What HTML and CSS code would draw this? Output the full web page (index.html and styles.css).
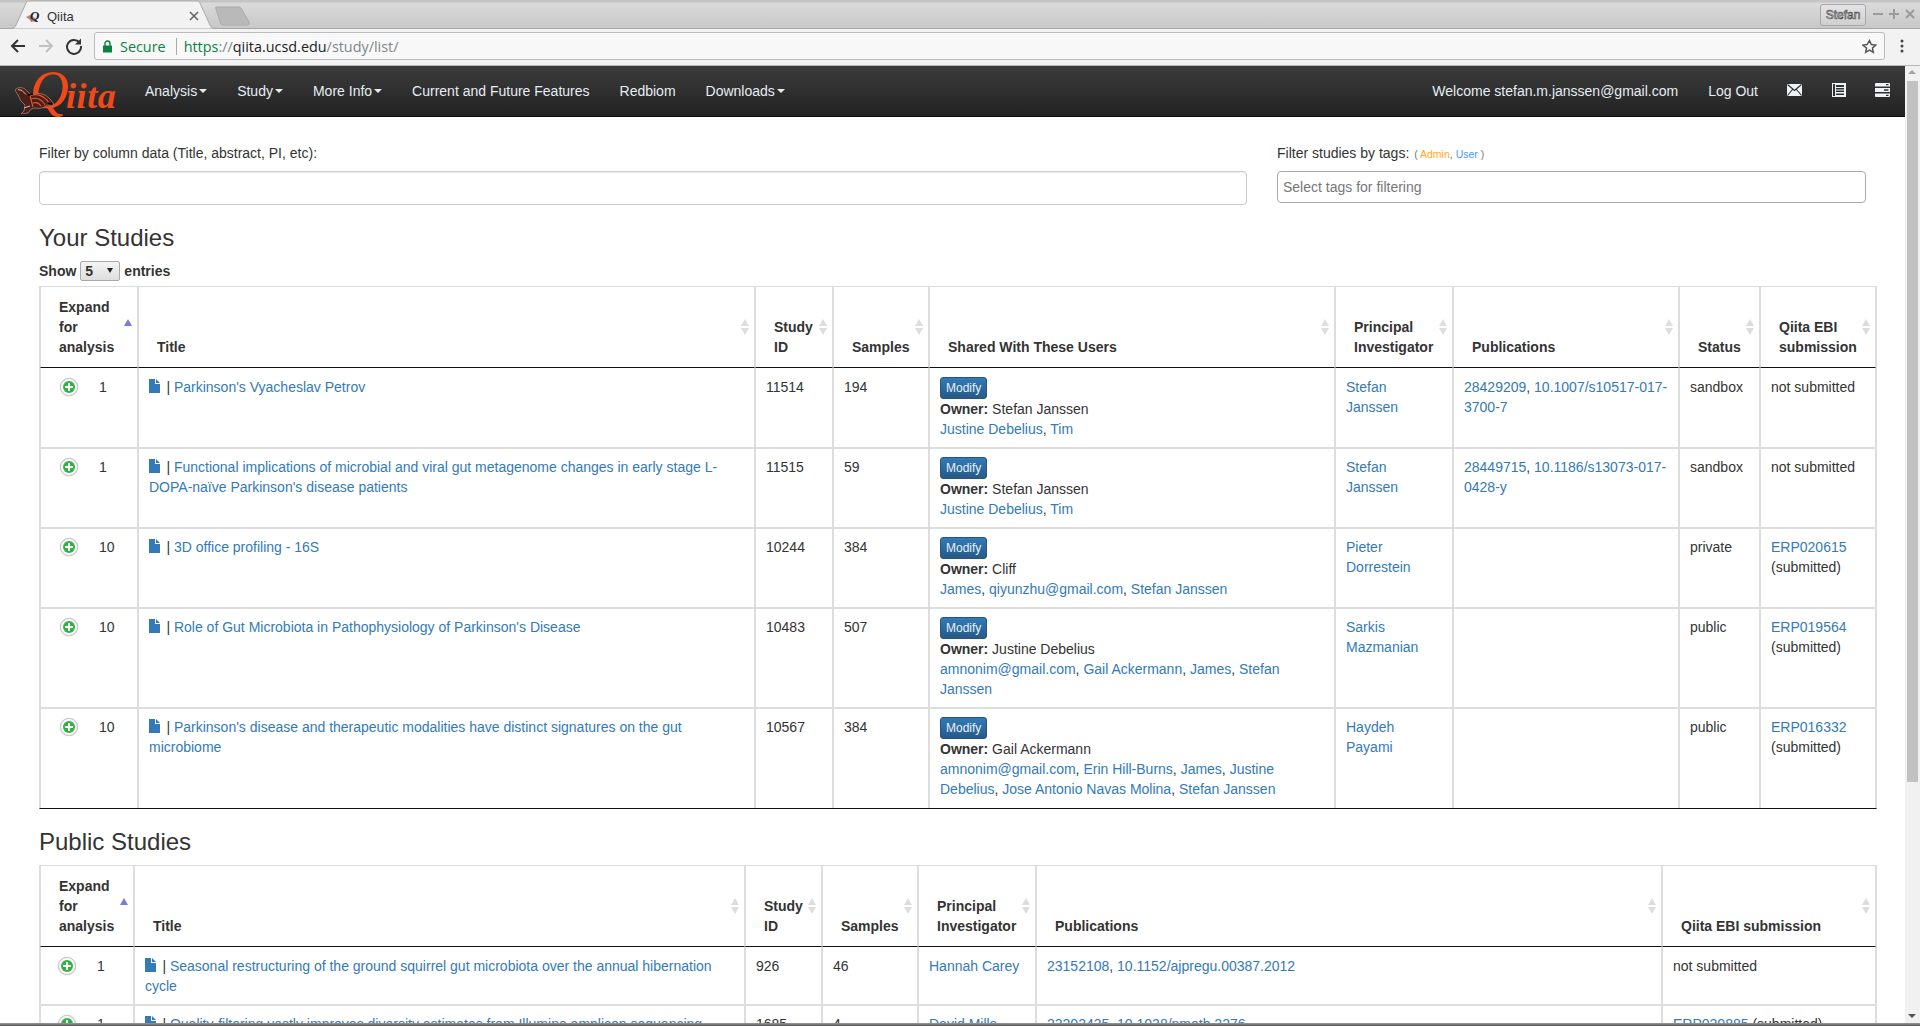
FILE: index.html
```html
<!DOCTYPE html>
<html lang="en">
<head>
<meta charset="utf-8">
<title>Qiita</title>
<link rel="stylesheet" href="styles.css">
</head>
<body>
<div class="browser">
  <div class="tabstrip">
    <div class="tab">
      <svg class="tab-shape" width="206" height="29" viewBox="0 0 206 29"><path d="M0 28.500H2C4 28.500 5 27 6 25L16 3C17 1.500 18 1 20 1H186C188 1 189 1.500 190 3L200 25C201 27 202 28.500 204 28.500H206" fill="#f2f2f2" stroke="#a8a8a8"/></svg>
      <svg class="favicon" width="16" height="16" viewBox="0 0 16 16"><path d="M0 9l4-2 4 2 3 4-6 1-1-2z" fill="#b08a84"/><text x="4" y="12" class="favicon-q">Q</text></svg>
      <span class="tab-title">Qiita</span>
      <svg class="tab-close" width="10" height="10" viewBox="0 0 10 10"><path d="M1 1l8 8M9 1l-8 8" stroke="#666" stroke-width="1.600"/></svg>
    </div>
    <svg class="newtab" width="36" height="20" viewBox="0 0 36 20"><path d="M1 1H24C25 1 26 1.500 26.500 3L34 16C35 18 34 19 32 19H8C7 19 6 18.500 5.500 17L1 3C0.500 2 0.500 1 1 1Z" fill="#b9b9b9" stroke="#aaa"/></svg>
    <span class="spacer"></span>
    <span class="profile">Stefan</span>
    <span class="winbtns">
      <svg width="10" height="10" viewBox="0 0 10 10"><path d="M0 5h10" stroke="#9a9a9a" stroke-width="2"/></svg>
      <svg width="10" height="10" viewBox="0 0 10 10"><path d="M0 5h10M5 0v10" stroke="#9a9a9a" stroke-width="2"/></svg>
      <svg width="10" height="10" viewBox="0 0 10 10"><path d="M1 1l8 8M9 1l-8 8" stroke="#9a9a9a" stroke-width="2"/></svg>
    </span>
  </div>
  <div class="toolbar">
    <svg class="tool" width="18" height="18" viewBox="0 0 18 18"><path d="M16 9H3M9 3L3 9l6 6" fill="none" stroke="#333" stroke-width="2"/></svg>
    <svg class="tool" width="18" height="18" viewBox="0 0 18 18"><path d="M2 9h13M9 3l6 6-6 6" fill="none" stroke="#c0c0c0" stroke-width="2"/></svg>
    <svg class="tool" width="18" height="18" viewBox="0 0 18 18"><path d="M14.500 5.500A7 7 0 1 0 16 9" fill="none" stroke="#333" stroke-width="2"/><path d="M16 1.500V7.500H10z" fill="#333"/></svg>
    <div class="omnibox">
      <svg class="lock" width="10" height="13" viewBox="0 0 10 13"><path d="M0 5.500h9v7H0z" fill="#0b8043"/><path d="M2 6V3.500a2.500 2.500 0 0 1 5 0V6" fill="none" stroke="#0b8043" stroke-width="1.400"/></svg>
      <span class="secure">Secure</span>
      <span class="omni-sep"></span>
      <span class="url"><span class="url-scheme">https</span><span class="url-dim">://</span><span class="url-host">qiita.ucsd.edu</span><span class="url-dim">/study/list/</span></span>
      <span class="spacer"></span>
      <svg width="15" height="15" viewBox="0 0 24 24"><path d="M12 2.500l2.900 6.400 7 .8-5.200 4.700 1.400 6.900-6.100-3.500-6.100 3.500 1.400-6.900L1.100 9.700l7-.8z" fill="none" stroke="#555" stroke-width="2.400"/></svg>
    </div>
    <svg class="kebab" width="4" height="14" viewBox="0 0 4 14"><circle cx="2" cy="2" r="1.500" fill="#444"/><circle cx="2" cy="7" r="1.500" fill="#444"/><circle cx="2" cy="12" r="1.500" fill="#444"/></svg>
  </div>
</div>

<div class="viewport">
  <div class="page">
    <nav class="navbar">
      <a class="brand">
        <span class="brand-q">Q</span><span class="brand-rest">iita</span>
        <svg class="turtle" width="44" height="27" viewBox="0 0 44 27">
          <path d="M0 3C2 0 7 0 10 2l6 6c5-3 14-2 19 4l4 5-2 2-5-1c-3 3-8 4-12 3l-4 1-3 4-7 1 3-3 1-6-4-4-3-6C2 6 1 5 0 3z" fill="#4a2018" stroke="#b98a80" stroke-width=".7"/>
          <path d="M15 9c6-3 14-1 19 7M16 12c5-2 11 0 14 6M18 16c3-1 6 0 8 3M15 9l3 11" fill="none" stroke="#e8552a" stroke-width="1.100"/>
          <path d="M3 2.500l4 1 4 4M9 21l6-2" fill="none" stroke="#d9bdb5" stroke-width="1"/>
          <path d="M13 8l5-1M33 16l4 1" stroke="#000" stroke-width="1.500"/>
        </svg>
      </a>
      <a class="nav-item">Analysis<span class="caret"></span></a>
      <a class="nav-item">Study<span class="caret"></span></a>
      <a class="nav-item">More Info<span class="caret"></span></a>
      <a class="nav-item">Current and Future Features</a>
      <a class="nav-item">Redbiom</a>
      <a class="nav-item">Downloads<span class="caret"></span></a>
      <span class="spacer"></span>
      <a class="nav-item">Welcome stefan.m.janssen@gmail.com</a>
      <a class="nav-item">Log Out</a>
      <a class="nav-item nav-icon"><svg class="wide-icon" width="15" height="14" viewBox="0 0 15 14"><path d="M0 1h15v12H0z" fill="#eef3f8"/><path d="M.5 1.500L7.500 7.500l7-6M.5 12.500l5-6M14.500 12.500l-5-6" fill="none" stroke="#2b2b2b" stroke-width="1.100"/></svg></a>
      <a class="nav-item nav-icon"><svg width="14" height="14" viewBox="0 0 14 14"><path fill-rule="evenodd" d="M0 0h14v14H0zM1 1v12h2V1zm3 1v2h8V2zm0 3v1.500h8V5zm0 2.500V9h8V7.500zm0 3V12h8v-1.500z" fill="#eef3f8"/></svg></a>
      <a class="nav-item nav-icon"><svg class="wide-icon" width="15" height="14" viewBox="0 0 15 14"><path fill-rule="evenodd" d="M1 0h13a1 1 0 0 1 1 1v2.500H0V1a1 1 0 0 1 1-1zm10 1v1.300h2.500V1zM0 5h15v4H0zm9 1.300v1.400h4.500V6.300zM0 10.500h15V13a1 1 0 0 1-1 1H1a1 1 0 0 1-1-1zm11 1.200V13h2.500v-1.300z" fill="#eef3f8"/></svg></a>
    </nav>

    <main class="content">
      <section class="filters">
        <div class="filter">
          <label class="filter-label">Filter by column data (Title, abstract, PI, etc):</label>
          <div class="text-input"></div>
        </div>
        <div class="filter">
          <label class="filter-label">Filter studies by tags: <small class="legend">( <span class="tag-admin">Admin</span>, <span class="tag-user">User</span> )</small></label>
          <div class="tag-input">Select tags for filtering</div>
        </div>
      </section>

      <h3 class="heading heading-first">Your Studies</h3>
      <div class="length"><b>Show</b><span class="select">5<i class="select-arrow"></i></span><b>entries</b></div>
      <table class="studies studies-own">
        <colgroup><col class="o1"><col class="o2"><col class="o3"><col class="o4"><col class="o5"><col class="o6"><col class="o7"><col class="o8"><col class="o9"></colgroup>
        <thead><tr>
          <th class="asc">Expand for analysis</th><th class="both">Title</th><th class="both">Study ID</th><th class="both">Samples</th><th class="both">Shared With These Users</th><th class="both">Principal Investigator</th><th class="both">Publications</th><th class="both">Status</th><th class="both">Qiita EBI submission</th>
        </tr></thead>
        <tbody>
          <tr>
            <td class="expand"><span class="plus"><i></i></span><span class="num">1</span></td>
            <td><svg class="doc" width="11" height="14" viewBox="0 0 11 14"><path d="M0 0h6v5h5v9H0zM7 0l4 4H7z"/></svg> | <a>Parkinson's Vyacheslav Petrov</a></td>
            <td>11514</td><td>194</td>
            <td><span class="btn">Modify</span><br><b>Owner:</b> Stefan Janssen<br><a>Justine Debelius</a>, <a>Tim</a></td>
            <td><a>Stefan Janssen</a></td>
            <td><a>28429209</a>, <a>10.1007/s10517-017-3700-7</a></td>
            <td>sandbox</td><td>not submitted</td>
          </tr>
          <tr>
            <td class="expand"><span class="plus"><i></i></span><span class="num">1</span></td>
            <td><svg class="doc" width="11" height="14" viewBox="0 0 11 14"><path d="M0 0h6v5h5v9H0zM7 0l4 4H7z"/></svg> | <a>Functional implications of microbial and viral gut metagenome changes in early stage L-DOPA-naïve Parkinson's disease patients</a></td>
            <td>11515</td><td>59</td>
            <td><span class="btn">Modify</span><br><b>Owner:</b> Stefan Janssen<br><a>Justine Debelius</a>, <a>Tim</a></td>
            <td><a>Stefan Janssen</a></td>
            <td><a>28449715</a>, <a>10.1186/s13073-017-0428-y</a></td>
            <td>sandbox</td><td>not submitted</td>
          </tr>
          <tr>
            <td class="expand"><span class="plus"><i></i></span><span class="num">10</span></td>
            <td><svg class="doc" width="11" height="14" viewBox="0 0 11 14"><path d="M0 0h6v5h5v9H0zM7 0l4 4H7z"/></svg> | <a>3D office profiling - 16S</a></td>
            <td>10244</td><td>384</td>
            <td><span class="btn">Modify</span><br><b>Owner:</b> Cliff<br><a>James</a>, <a>qiyunzhu@gmail.com</a>, <a>Stefan Janssen</a></td>
            <td><a>Pieter Dorrestein</a></td>
            <td></td>
            <td>private</td><td><a>ERP020615</a> (submitted)</td>
          </tr>
          <tr>
            <td class="expand"><span class="plus"><i></i></span><span class="num">10</span></td>
            <td><svg class="doc" width="11" height="14" viewBox="0 0 11 14"><path d="M0 0h6v5h5v9H0zM7 0l4 4H7z"/></svg> | <a>Role of Gut Microbiota in Pathophysiology of Parkinson's Disease</a></td>
            <td>10483</td><td>507</td>
            <td><span class="btn">Modify</span><br><b>Owner:</b> Justine Debelius<br><a>amnonim@gmail.com</a>, <a>Gail Ackermann</a>, <a>James</a>, <a>Stefan Janssen</a></td>
            <td><a>Sarkis Mazmanian</a></td>
            <td></td>
            <td>public</td><td><a>ERP019564</a> (submitted)</td>
          </tr>
          <tr>
            <td class="expand"><span class="plus"><i></i></span><span class="num">10</span></td>
            <td><svg class="doc" width="11" height="14" viewBox="0 0 11 14"><path d="M0 0h6v5h5v9H0zM7 0l4 4H7z"/></svg> | <a>Parkinson's disease and therapeutic modalities have distinct signatures on the gut microbiome</a></td>
            <td>10567</td><td>384</td>
            <td><span class="btn">Modify</span><br><b>Owner:</b> Gail Ackermann<br><a>amnonim@gmail.com</a>, <a>Erin Hill-Burns</a>, <a>James</a>, <a>Justine Debelius</a>, <a>Jose Antonio Navas Molina</a>, <a>Stefan Janssen</a></td>
            <td><a>Haydeh Payami</a></td>
            <td></td>
            <td>public</td><td><a>ERP016332</a> (submitted)</td>
          </tr>
        </tbody>
      </table>

      <h3 class="heading heading-second">Public Studies</h3>
      <table class="studies studies-public">
        <colgroup><col class="p1"><col class="p2"><col class="p3"><col class="p4"><col class="p5"><col class="p6"><col class="p7"></colgroup>
        <thead><tr>
          <th class="asc">Expand for analysis</th><th class="both">Title</th><th class="both">Study ID</th><th class="both">Samples</th><th class="both">Principal Investigator</th><th class="both">Publications</th><th class="both">Qiita EBI submission</th>
        </tr></thead>
        <tbody>
          <tr>
            <td class="expand"><span class="plus"><i></i></span><span class="num">1</span></td>
            <td><svg class="doc" width="11" height="14" viewBox="0 0 11 14"><path d="M0 0h6v5h5v9H0zM7 0l4 4H7z"/></svg> | <a>Seasonal restructuring of the ground squirrel gut microbiota over the annual hibernation cycle</a></td>
            <td>926</td><td>46</td>
            <td><a>Hannah Carey</a></td>
            <td><a>23152108</a>, <a>10.1152/ajpregu.00387.2012</a></td>
            <td>not submitted</td>
          </tr>
          <tr>
            <td class="expand"><span class="plus"><i></i></span><span class="num">1</span></td>
            <td><svg class="doc" width="11" height="14" viewBox="0 0 11 14"><path d="M0 0h6v5h5v9H0zM7 0l4 4H7z"/></svg> | <a>Quality-filtering vastly improves diversity estimates from Illumina amplicon sequencing</a> -</td>
            <td>1685</td><td>4</td>
            <td><a>David Mills</a></td>
            <td><a>23202435</a>, <a>10.1038/nmeth.2276</a></td>
            <td><a>ERP020885</a> (submitted)</td>
          </tr>
        </tbody>
      </table>
    </main>
  </div>
  <div class="scrollbar">
    <span class="sb-arrow sb-up"></span>
    <span class="sb-thumb"></span>
    <span class="spacer"></span>
    <span class="sb-arrow sb-down"></span>
  </div>
</div>
<div class="window-edge"></div>
</body>
</html>
```
FILE: styles.css
```css
* { box-sizing: border-box; }
html, body { height: 100%; margin: 0; }
body {
  display: flex; flex-direction: column; overflow: hidden;
  font: 14px/20px "Liberation Sans", Arial, sans-serif; color: #333; background: #fff;
}
.spacer { flex: 1 1 auto; }

/* browser chrome */
.browser { flex: none; height: 66px; background: #f2f2f2; }
.tabstrip {
  height: 29px; display: flex; align-items: flex-start;
  background: linear-gradient(#c4c4c4 0, #c4c4c4 2px, #dadada 3px, #c8c8c8 100%);
  border-bottom: 1px solid #a8a8a8; padding-left: 10px; padding-right: 5px;
}
.tab { position: relative; width: 206px; height: 29px; display: flex; align-items: center; padding: 3px 0 0 16px; flex: none; }
.tab-shape { position: absolute; left: 0; top: 0; }
.favicon, .tab-title, .tab-close { position: relative; }
.favicon-q { font: italic bold 13px "Liberation Serif", serif; fill: #222; }
.tab-title { margin-left: 5px; font: 13px "Liberation Sans", sans-serif; color: #333; }
.tab-close { margin-left: auto; margin-right: 17px; }
.newtab { flex: none; margin: 6px 0 0 -1px; }
.profile {
  margin-top: 4px; width: 46px; height: 22px; border: 1px solid #a8a8a8; border-radius: 3px;
  background: linear-gradient(#e4e4e4, #d0d0d0);
  font: 12px/20px "Liberation Sans", sans-serif; text-align: center; color: #e8e8e8;
  -webkit-text-stroke: .6px #444;
}
.winbtns { display: flex; gap: 6px; margin: 9px 0 0 7px; }
.toolbar {
  height: 37px; display: flex; align-items: center; padding: 0 16px 2px 9px; gap: 7px;
  background: #f2f2f2; border-bottom: 1px solid #b8b8b8;
}
.tool { flex: none; margin-right: 3px; }
.omnibox {
  flex: 1; height: 28px; margin: 0 8px 0 1px; padding: 0 7px 0 8px;
  display: flex; align-items: center;
  background: #f8f8f8; border: 1px solid #bbb; border-radius: 3px;
  font: 14.400px "Open Sans", sans-serif;
}
.secure { color: #0b8043; margin-left: 7px; }
.omni-sep { width: 1px; height: 17px; background: #aaa; margin: 0 7px 0 10px; }
.url-scheme { color: #0b8043; }
.url-dim { color: #80868b; }
.url-host { color: #202124; }
.kebab { flex: none; }

/* viewport */
.viewport { flex: 1 1 0; min-height: 0; display: flex; overflow: hidden; }
.page { flex: 1 1 0; min-width: 0; }
.scrollbar { flex: none; width: 15px; background: #f1f1f1; display: flex; flex-direction: column; align-items: center; }
.sb-arrow { flex: none; width: 15px; height: 15px; position: relative; }
.sb-arrow::after { content: ""; position: absolute; left: 3px; border: 4.500px solid transparent; }
.sb-up::after { top: 0; border-bottom-color: #a3a3a3; }
.sb-down::after { top: 6px; border-top-color: #505050; }
.sb-thumb { width: 15px; height: 701px; background: #c1c1c1; flex: none; border-left: 2px solid #f1f1f1; border-right: 2px solid #f1f1f1; }
.window-edge { flex: none; height: 3px; background: linear-gradient(#9a9a9a, #555); }

/* navbar */
.navbar {
  height: 51px; display: flex; align-items: center;
  background: linear-gradient(#3c3c3c, #222); border-bottom: 1px solid #080808;
}
.brand { width: 130px; height: 50px; display: flex; align-items: baseline; padding: 2px 0 0 30px; position: relative; color: #f04a1c; }
.turtle { position: absolute; left: 15px; top: 21px; }
.brand-q { font: italic 54px/44px "Liberation Serif", serif; }
.brand-rest { font: italic bold 36px/44px "Liberation Serif", serif; margin-left: -3px; letter-spacing: .6px; }
.nav-item { padding: 0 15px; color: #e6edf3; white-space: nowrap; line-height: 50px; display: flex; align-items: center; }
.nav-icon svg { display: block; margin-top: -2px; }
.nav-icon .wide-icon { margin-left: -1px; }
.caret { display: inline-block; margin-left: 2px; border-top: 4px solid #e6edf3; border-left: 4px solid transparent; border-right: 4px solid transparent; }

/* content */
.content { padding: 0 29px 0 39px; }
.filters { display: grid; grid-template-columns: 1208px 589px; column-gap: 30px; padding-top: 26px; }
.filter-label { display: block; height: 20px; margin-bottom: 8px; }
.legend { font-size: 10.500px; color: #777; margin-left: 1px; }
.tag-admin { color: #ffab1a; }
.tag-user { color: #3f9cff; }
.text-input { height: 34px; border: 1px solid #ccc; border-radius: 4px; background: #fff; box-shadow: inset 0 1px 1px rgba(0,0,0,.075); }
.tag-input { height: 32px; padding: 5px; border: 1px solid #aaa; border-radius: 4px; color: #777; line-height: 20px; }

.heading { font-size: 24px; font-weight: 500; line-height: 26px; margin: 0; color: #333; }
.heading-first { margin-top: 20px; }
.heading-second { margin-top: 20px; margin-bottom: 10px; }

.length { display: flex; align-items: center; height: 20px; margin: 10px 0 5px; }
.select {
  position: relative; width: 40px; height: 20px; margin: 0 4px 0 4px; padding-left: 4px;
  border: 1px solid #aaa; border-radius: 2px; background: linear-gradient(#f4f4f4, #dedede);
  font-weight: bold; font-size: 14px; line-height: 18px;
}
.select-arrow {
  position: absolute; right: 6px; top: 6px;
  border-top: 5px solid #222; border-left: 3px solid transparent; border-right: 3px solid transparent;
}

/* tables */
.studies {
  table-layout: fixed; width: 1838px; border-collapse: separate; border-spacing: 0;
  border: 1px solid #ddd; border-bottom: 1px solid #111;
}
.o1 { width: 98px; } .o2 { width: 617px; } .o3 { width: 78px; } .o4 { width: 96px; } .o5 { width: 406px; }
.o6 { width: 118px; } .o7 { width: 226px; } .o8 { width: 81px; } .o9 { width: 116px; }
.p1 { width: 94px; } .p2 { width: 611px; } .p3 { width: 77px; } .p4 { width: 96px; } .p5 { width: 118px; }
.p6 { width: 626px; } .p7 { width: 214px; }

.studies th {
  position: relative; vertical-align: bottom; text-align: left; font-weight: bold;
  padding: 10px 18px 10px; border: 1px solid #ddd; border-top: 0; border-bottom: 1px solid #111;
}
.studies td { vertical-align: top; padding: 8px 10px; border: 1px solid #ddd; border-top: 0; }
.studies tbody tr:first-child td { padding-top: 9px; }
.studies tbody tr:not(:first-child) td { border-top: 1px solid #ddd; }
.studies tbody tr:last-child td { border-bottom: 0; padding-bottom: 9px; }
.studies a { color: #337ab7; }

.both::before, .both::after, .asc::before {
  content: ""; position: absolute; right: 5px; top: 50%;
  border-left: 4px solid transparent; border-right: 4px solid transparent;
}
.both::before { margin-top: -8px; border-bottom: 7px solid #ddd; }
.both::after { margin-top: 1px; border-top: 7px solid #ddd; }
.asc::before { margin-top: -8px; border-bottom: 7px solid #7b7bdb; }

.expand { padding-left: 19px !important; }
.studies-public .expand { padding-left: 17px !important; }
.plus {
  display: inline-flex; width: 18px; height: 18px; align-items: center; justify-content: center; vertical-align: top; margin-top: 1px;
  border-radius: 50%; background: #fff; border: 1px solid #c8c8c8; box-shadow: 0 0 1px #aaa;
}
.plus i {
  display: block; width: 12px; height: 12px; border-radius: 50%;
  background:
    linear-gradient(#fff, #fff) center / 8px 2px no-repeat,
    linear-gradient(#fff, #fff) center / 2px 8px no-repeat,
    #2fb344;
}
.num { display: inline-block; margin-left: 21px; }
.doc { fill: #337ab7; vertical-align: -1px; margin-right: 2.500px; }
.btn {
  display: inline-block; height: 22px; padding: 0 5px; border: 1px solid #245580; border-radius: 3px;
  background: linear-gradient(#337ab7, #265a88); color: #e8f2fb; font-size: 12px; line-height: 20px;
}
```
